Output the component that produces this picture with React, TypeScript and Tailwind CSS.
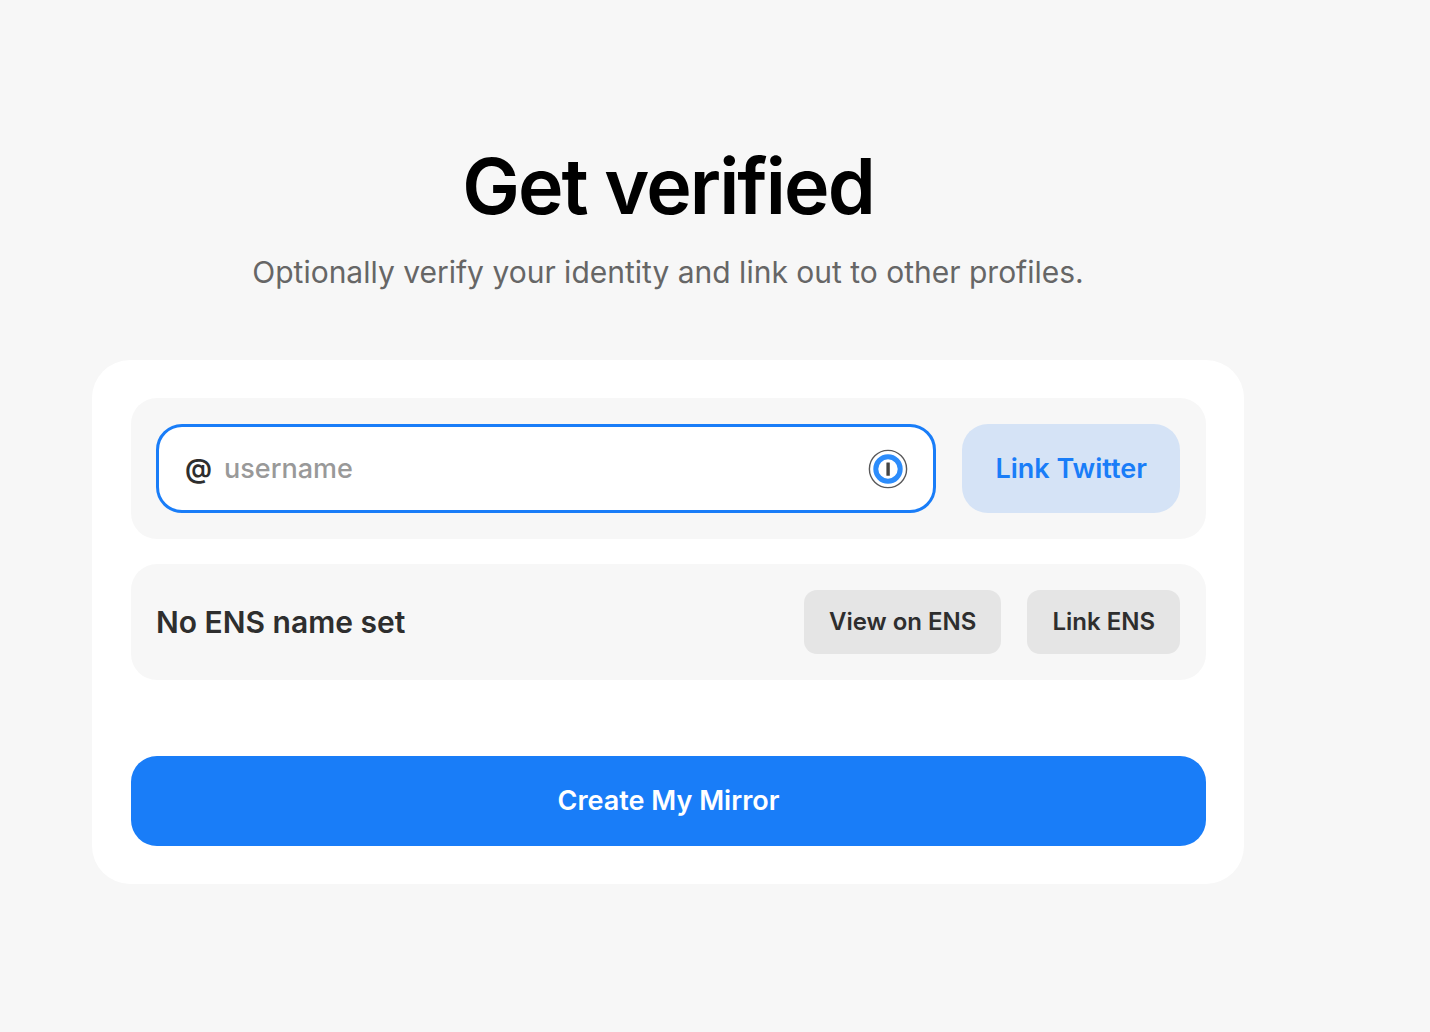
import React, { useState } from 'react';

const PasswordManagerIcon: React.FC = () => (
  <svg viewBox="0 0 40 40" className="size-10" aria-hidden="true">
    <circle cx="20" cy="20" r="18.6" fill="#fff" stroke="#58585a" strokeWidth="1.4" />
    <circle cx="20" cy="20" r="12.2" fill="#fff" stroke="#2c8cfb" strokeWidth="5" />
    <rect x="18.4" y="13.4" width="3.4" height="13.4" rx="0.4" fill="#444" />
  </svg>
);

const App: React.FC = () => {
  const [username, setUsername] = useState('');

  return (
    <main className="min-h-screen bg-[#f7f7f7] pt-[140px] pr-[186px] pb-[148px] pl-[92px] font-['Inter',sans-serif] text-[#2e2e2e]">
      <header className="text-center">
        <h1 className="text-[77px] leading-[92px] font-semibold tracking-tight text-black">Get verified</h1>
        <p className="mt-4 text-[30px] leading-[48px] text-[#666]">
          Optionally verify your identity and link out to other profiles.
        </p>
      </header>

      <section className="mt-16 rounded-[38px] bg-white py-[38px] pr-[38px] pl-[39px]">
        <form className="flex items-stretch gap-[26px] rounded-[26px] bg-[#f7f7f7] py-[26px] pr-[26px] pl-[25px]" onSubmit={(e) => e.preventDefault()}>
          <div className="flex h-[89px] min-w-0 flex-1 items-center rounded-[26px] border-3 border-[#197df8] bg-white pr-[25px] pl-[26px]">
            <label htmlFor="username" className="text-[27px] leading-[42px] font-semibold">@</label>
            <input
              id="username"
              type="text"
              placeholder="username"
              value={username}
              onChange={(e) => setUsername(e.target.value)}
              className="ml-3 min-w-0 flex-1 bg-transparent text-[27px] leading-[42px] font-medium outline-none placeholder:text-[#999]"
            />
            <PasswordManagerIcon />
          </div>
          <button type="submit" className="rounded-[26px] bg-[#d5e3f6] px-[33px] text-[27px] leading-[42px] font-semibold text-[#197df8]">
            Link Twitter
          </button>
        </form>

        <div className="mt-[25px] flex items-center gap-[26px] rounded-[26px] bg-[#f7f7f7] py-[26px] pr-[26px] pl-[25px]">
          <h2 className="flex-1 text-[30px] leading-10 font-semibold">No ENS name set</h2>
          <button type="button" className="h-16 rounded-[13px] bg-[#e5e5e5] px-[25px] text-[24px] font-semibold">
            View on ENS
          </button>
          <button type="button" className="h-16 rounded-[13px] bg-[#e5e5e5] px-[25px] text-[24px] font-semibold">
            Link ENS
          </button>
        </div>

        <button type="button" className="mt-[76px] h-[90px] w-full rounded-[26px] bg-[#197df8] text-[27px] leading-[42px] font-semibold text-white">
          Create My Mirror
        </button>
      </section>
    </main>
  );
};

export default App;
